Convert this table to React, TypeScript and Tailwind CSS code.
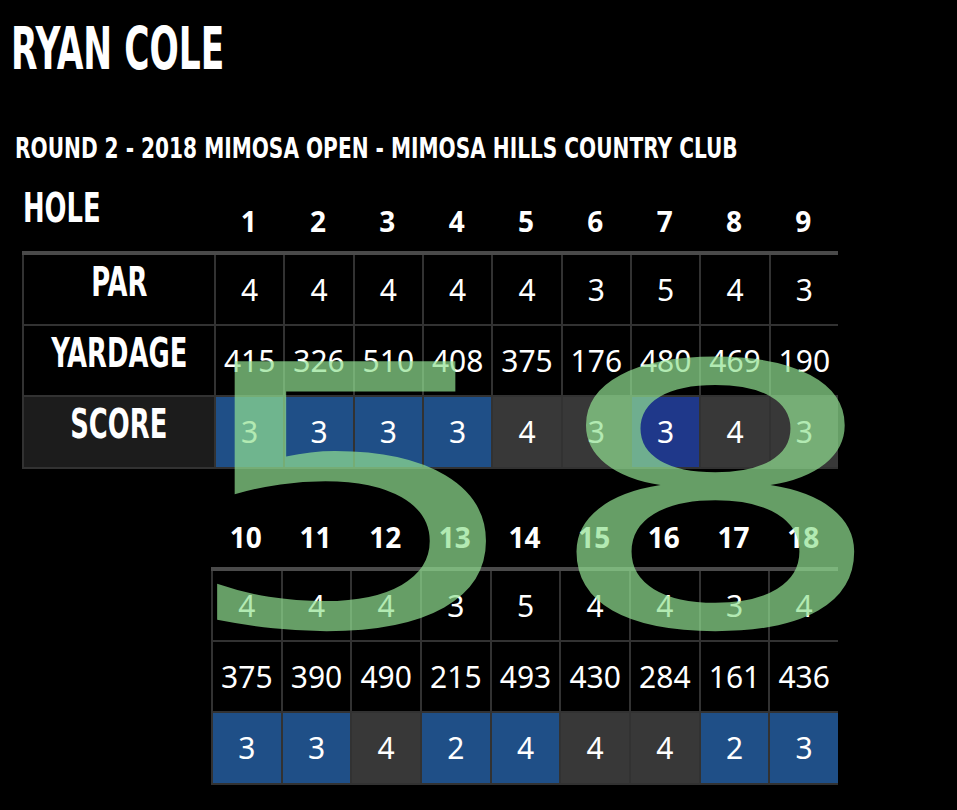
const FRONT = {
  holes: [1, 2, 3, 4, 5, 6, 7, 8, 9],
  par: [4, 4, 4, 4, 4, 3, 5, 4, 3],
  yards: [415, 326, 510, 408, 375, 176, 480, 469, 190],
  score: [3, 3, 3, 3, 4, 3, 3, 4, 3],
};

const BACK = {
  holes: [10, 11, 12, 13, 14, 15, 16, 17, 18],
  par: [4, 4, 4, 3, 5, 4, 4, 3, 4],
  yards: [375, 390, 490, 215, 493, 430, 284, 161, 436],
  score: [3, 3, 4, 2, 4, 4, 4, 2, 3],
};

const cond = "font-['DejaVu_Sans_Condensed','Liberation_Sans_Narrow',sans-serif] font-bold";
const num = "font-['Noto_Sans',sans-serif]";

const scoreBg = (score: number, par: number) => {
  const d = score - par;
  if (d <= -2) return 'bg-[#1f388a]';
  if (d === -1) return 'bg-[#1f4f87]';
  return 'bg-[#383838]';
};

type Nine = typeof FRONT;

const Label = ({ text, left }: { text: string; left?: boolean }) => (
  <span
    className={`${cond} inline-block text-[33px] leading-none scale-x-[0.87] scale-y-[1.25] ${left ? 'origin-left' : ''}`}
  >
    {text}
  </span>
);

const NineTable = ({ data, labels }: { data: Nine; labels: boolean }) => {
  const line = 'border-l-2 border-b-2 border-[#323232]';
  const cell = `${line} flex items-center justify-center`;
  const labelCell = `${line} flex items-start justify-center pt-[10px]`;
  return (
    <div
      className={
        labels
          ? 'ml-[22px] w-[816px] grid grid-cols-[192px_repeat(9,minmax(0,1fr))] grid-rows-[70px_71px_71px_72px]'
          : 'ml-[211px] w-[627px] grid grid-cols-[repeat(9,minmax(0,1fr))] grid-rows-[70px_71px_71px_72px]'
      }
    >
      {/* hole numbers */}
      {labels && (
        <div className="border-b-4 border-[#4a4a4a] pt-[6px] pl-[1px]">
          <Label text="HOLE" left />
        </div>
      )}
      {data.holes.map((h) => (
        <div
          key={`h${h}`}
          className={`${num} border-b-4 border-[#4a4a4a] flex items-center justify-center pt-[6px] text-[28px] font-bold leading-none`}
        >
          {h}
        </div>
      ))}

      {/* par */}
      {labels && (
        <div className={labelCell}>
          <Label text="PAR" />
        </div>
      )}
      {data.par.map((p, i) => (
        <div key={`p${i}`} className={`${cell} ${num} text-[30px] leading-none`}>
          {p}
        </div>
      ))}

      {/* yardage */}
      {labels && (
        <div className={labelCell}>
          <Label text="YARDAGE" />
        </div>
      )}
      {data.yards.map((y, i) => (
        <div key={`y${i}`} className={`${cell} ${num} text-[30px] leading-none`}>
          {y}
        </div>
      ))}

      {/* score */}
      {labels && (
        <div className={`${labelCell} bg-[#1c1c1c]`}>
          <Label text="SCORE" />
        </div>
      )}
      {data.score.map((s, i) => (
        <div key={`s${i}`} className={`${cell} ${num} ${scoreBg(s, data.par[i])} text-[30px] leading-none`}>
          {s}
        </div>
      ))}
    </div>
  );
};

export default function App() {
  return (
    <div className="relative w-[957px] h-[810px] overflow-hidden bg-black text-white">
      <div className="pt-[27px]">
        <div className="ml-[11px] h-[44px]">
          <span className={`${cond} inline-block origin-left text-[44px] leading-none scale-x-[0.87] scale-y-[1.32]`}>
            RYAN COLE
          </span>
        </div>
        <div className="ml-[15px] mt-[64px] h-[28px] whitespace-nowrap">
          <span className={`${cond} inline-block origin-left text-[28px] leading-none scale-x-[0.8]`}>
            ROUND 2 - 2018 MIMOSA OPEN - MIMOSA HILLS COUNTRY CLUB
          </span>
        </div>
        <div className="mt-[22px]">
          <NineTable data={FRONT} labels />
        </div>
        <div className="mt-[32px]">
          <NineTable data={BACK} labels={false} />
        </div>
      </div>

      {/* total score overlay */}
      <div className="pointer-events-none absolute inset-0 font-['DejaVu_Sans',sans-serif] text-[363px] leading-none text-[#91e191]/70">
        <span className="absolute left-[239px] top-[319px] inline-block scale-x-[1.57]">5</span>
        <span className="absolute left-[600px] top-[319px] inline-block scale-x-[1.53]">8</span>
      </div>
    </div>
  );
}
